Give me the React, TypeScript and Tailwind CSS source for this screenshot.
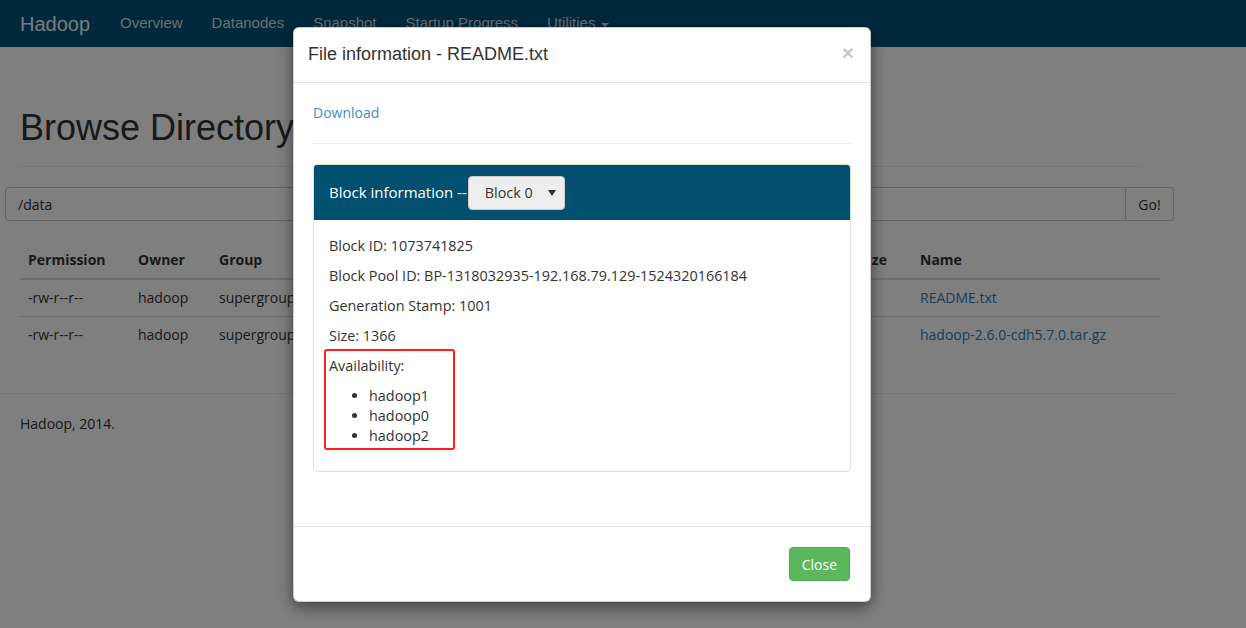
import React from "react";

const rows = [
  { perm: "-rw-r--r--", owner: "hadoop", group: "supergroup", size: "1.33 KB", mod: "4/22/2018, 12:35 AM", rep: "3", bs: "128 MB", name: "README.txt" },
  { perm: "-rw-r--r--", owner: "hadoop", group: "supergroup", size: "297.12 MB", mod: "4/22/2018, 12:36 AM", rep: "3", bs: "128 MB", name: "hadoop-2.6.0-cdh5.7.0.tar.gz" },
];

const cols = "grid grid-cols-[110px_81px_120px_90px_220px_169px_102px_1fr]";

function Navbar() {
  return (
    <nav className="flex h-[47px] items-center bg-[#00537a] font-['Liberation_Sans',Arial,sans-serif]">
      <span className="pl-5 pr-[15.5px] text-[20px] text-[#f2f6f8]">Hadoop</span>
      <ul className="flex items-center text-[15px] text-[#d4dde2]">
        <li className="px-[14.5px]">Overview</li>
        <li className="px-[14.5px]">Datanodes</li>
        <li className="px-[14.5px]">Snapshot</li>
        <li className="px-[14.5px]">Startup Progress</li>
        <li className="flex items-center gap-1.5 px-[14.5px]">
          Utilities
          <span className="mt-0.5 border-x-4 border-t-4 border-x-transparent border-t-[#d4dde2]" />
        </li>
      </ul>
    </nav>
  );
}

function Page() {
  return (
    <div className="font-['Open_Sans','Noto_Sans',sans-serif] text-[14px] text-[#333]">
      <div className="w-[1160px] px-5">
        <h1 className="mt-[61px] pb-[18px] font-['Liberation_Sans',Arial,sans-serif] text-[36px] leading-[40px] text-[#333]">
          Browse Directory
        </h1>
        <div className="border-t border-[#eee]" />
      </div>
      <div className="ml-[5px] mt-5 flex h-[34px] w-[1169px]">
        <div className="flex flex-1 items-center rounded-l border border-[#ccc] px-3">/data</div>
        <div className="flex w-[48px] items-center justify-center rounded-r border border-l-0 border-[#ccc] bg-white">
          Go!
        </div>
      </div>
      <div className="mx-5 mt-[21px] w-[1140px]">
        <div className={`${cols} border-b-2 border-[#ddd] py-2 font-bold leading-5`}>
          <span className="truncate px-2">Permission</span>
          <span className="truncate px-2">Owner</span>
          <span className="truncate px-2">Group</span>
          <span className="truncate px-2">Size</span>
          <span className="truncate px-2">Last Modified</span>
          <span className="truncate px-2">Replication</span>
          <span className="truncate px-2">Block Size</span>
          <span className="px-2">Name</span>
        </div>
        {rows.map((r) => (
          <div key={r.name} className={`${cols} border-b border-[#ddd] py-2 leading-5 last:border-b-0`}>
            <span className="truncate px-2">{r.perm}</span>
            <span className="truncate px-2">{r.owner}</span>
            <span className="truncate px-2">{r.group}</span>
            <span className="truncate px-2">{r.size}</span>
            <span className="truncate px-2">{r.mod}</span>
            <span className="truncate px-2">{r.rep}</span>
            <span className="truncate px-2">{r.bs}</span>
            <span className="px-2 text-[#337ab7]">{r.name}</span>
          </div>
        ))}
      </div>
      <div className="mt-[40px] w-[1175px] border-t border-[#eee]" />
      <p className="mt-[20px] px-5 leading-5">Hadoop, 2014.</p>
    </div>
  );
}

function Modal() {
  return (
    <div className="absolute left-[293px] top-[27px] w-[578px] rounded-md border border-black/20 bg-white font-['Open_Sans','Noto_Sans',sans-serif] text-[14px] text-[#333] shadow-[0_5px_15px_rgba(0,0,0,0.5)]">
      <div className="flex h-[55px] items-center justify-between border-b border-[#e5e5e5] px-[14px]">
        <h4 className="-mt-px font-['Liberation_Sans',Arial,sans-serif] text-[18px] text-[#333]">File information - README.txt</h4>
        <span className="-mt-[6px] mr-[2px] font-['Liberation_Sans',Arial,sans-serif] text-[21px] font-bold leading-none text-[#c8c8c8]">×</span>
      </div>
      <div className="px-[19px] pb-[54px] pt-[20px]">
        <a className="block leading-5 text-[#428bca]">Download</a>
        <div className="my-5 border-t border-[#eee]" />
        <div className="rounded border border-[#d6e9c6]">
          <div className="flex h-[55px] items-center rounded-t-[3px] bg-[#024f6f] px-[15px] text-[15px] text-white">
            <span>Block information --</span>
            <div className="ml-[1px] flex h-[34px] w-[97px] items-center justify-between rounded border border-[#ccc] bg-[#eee] pl-4 pr-2 text-[14.4px] text-[#333]">
              <span>Block 0</span>
              <span className="border-x-[4px] border-t-[6px] border-x-transparent border-t-[#333]" />
            </div>
          </div>
          <div className="relative p-[15px] pt-[16px] text-[14.4px] leading-5">
            <p className="mb-[10px]">Block ID: 1073741825</p>
            <p className="mb-[10px]">Block Pool ID: BP-1318032935-192.168.79.129-1524320166184</p>
            <p className="mb-[10px]">Generation Stamp: 1001</p>
            <p className="mb-[10px]">Size: 1366</p>
            <p className="mb-[10px]">Availability:</p>
            <ul className="mb-[10px] list-disc pl-10">
              <li>hadoop1</li>
              <li>hadoop0</li>
              <li>hadoop2</li>
            </ul>
            <div className="absolute left-[10px] top-[129px] h-[101px] w-[131px] rounded-[3px] border-2 border-[#ff1f1f]" />
          </div>
        </div>
      </div>
      <div className="flex justify-end border-t border-[#e5e5e5] p-5">
        <button className="h-[34px] rounded border border-[#4cae4c] bg-[#5cb85c] px-3 text-[14px] text-white">Close</button>
      </div>
    </div>
  );
}

export default function App() {
  return (
    <div className="relative h-[628px] w-full overflow-hidden bg-white">
      <Navbar />
      <Page />
      <div className="absolute inset-0 bg-black/50" />
      <Modal />
    </div>
  );
}
